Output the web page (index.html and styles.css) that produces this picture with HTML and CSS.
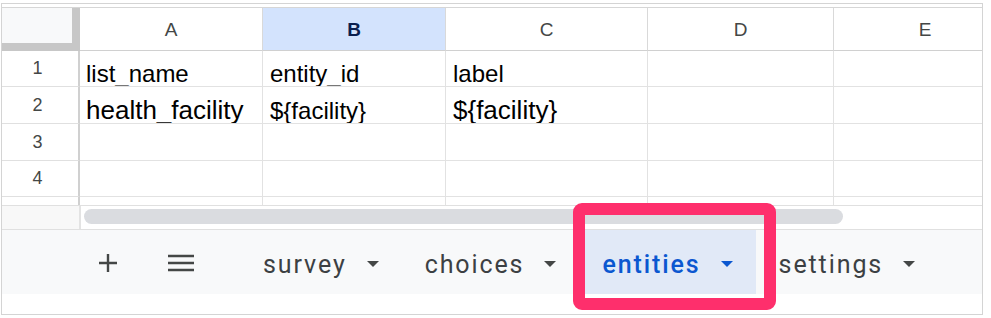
FILE: index.html
```html
<!DOCTYPE html>
<html>
<head>
<meta charset="utf-8">
<link rel="stylesheet" href="styles.css">
</head>
<body>
<div class="frame">
  <div class="grid">
    <div class="corner"></div>
    <div class="colhdr">A</div>
    <div class="colhdr sel">B</div>
    <div class="colhdr">C</div>
    <div class="colhdr">D</div>
    <div class="colhdr">E</div>

    <div class="rowhdr r1">1</div>
    <div class="cell r1">list_name</div>
    <div class="cell r1">entity_id</div>
    <div class="cell r1">label</div>
    <div class="cell r1"></div>
    <div class="cell r1"></div>

    <div class="rowhdr">2</div>
    <div class="cell big">health_facility</div>
    <div class="cell">${facility}</div>
    <div class="cell big">${facility}</div>
    <div class="cell"></div>
    <div class="cell"></div>

    <div class="rowhdr">3</div>
    <div class="cell"></div>
    <div class="cell"></div>
    <div class="cell"></div>
    <div class="cell"></div>
    <div class="cell"></div>

    <div class="rowhdr r4">4</div>
    <div class="cell r4"></div>
    <div class="cell r4"></div>
    <div class="cell r4"></div>
    <div class="cell r4"></div>
    <div class="cell r4"></div>

    <div class="rowhdr part"></div>
    <div class="cell part"></div>
    <div class="cell part"></div>
    <div class="cell part"></div>
    <div class="cell part"></div>
    <div class="cell part"></div>
  </div>
  <div class="scrollrow">
    <div class="scrollcorner"></div>
    <div class="track"><div class="thumb"></div></div>
  </div>
  <div class="tabbar">
    <div class="iconbtn plus">
      <svg width="20" height="20" viewBox="0 0 20 20"><path d="M10 1v18M1 10h18" stroke="#444746" stroke-width="2.4" fill="none"/></svg>
    </div>
    <div class="iconbtn menu">
      <svg width="28" height="18" viewBox="0 0 28 18"><path d="M1 2h26M1 9h26M1 16h26" stroke="#444746" stroke-width="2.4" fill="none"/></svg>
    </div>
    <div class="tabs">
      <div class="tab"><span class="tname">survey</span><span class="caret"></span></div>
      <div class="tab"><span class="tname">choices</span><span class="caret"></span></div>
      <div class="tab active"><span class="tname">entities</span><span class="caret"></span></div>
      <div class="tab"><span class="tname">settings</span><span class="caret"></span></div>
    </div>
  </div>
  <div class="foot"></div>
  <div class="highlight"></div>
</div>
</body>
</html>
```
FILE: styles.css
```css
html, body {
  margin: 0;
  padding: 0;
  background: #ffffff;
}
body {
  width: 991px;
  height: 318px;
  overflow: hidden;
  font-family: "Liberation Sans", Arial, sans-serif;
}
.frame {
  position: relative;
  margin: 3px 0 0 1px;
  width: 980px;
  height: 307px;
  border: 1px solid #d4d4d4;
  padding-top: 3px;
  box-sizing: content-box;
}
.grid {
  display: grid;
  grid-template-columns: 78px 183px 183px 202px 186px 183px;
  grid-template-rows: 43px 36px 37px 37px 36px 8px;
  border-top: 1px solid #d6d6d6;
  width: 980px;
  overflow: hidden;
}
.corner {
  background: #f8f9fa;
  border-right: 8px solid #c7c7c7;
  border-bottom: 8px solid #c7c7c7;
}
.colhdr {
  display: flex;
  align-items: center;
  justify-content: center;
  font-size: 19px;
  color: #444746;
  border-right: 1px solid #d9d9d9;
  border-bottom: 1px solid #d0d0d0;
  padding-top: 1px;
}
.colhdr.sel {
  background: #d3e3fd;
  color: #0b1f4e;
  font-weight: bold;
}
.rowhdr {
  display: flex;
  align-items: center;
  justify-content: center;
  font-size: 18px;
  color: #444746;
  border-right: 2px solid #d0d0d0;
  border-bottom: 1px solid #e0e0e0;
  padding-right: 5px;
}
.cell {
  display: flex;
  align-items: flex-end;
  padding: 0 0 0 7px;
  font-size: 24px;
  line-height: 1;
  color: #000;
  border-right: 1px solid #e2e2e2;
  border-bottom: 1px solid #e2e2e2;
  white-space: nowrap;
  overflow: hidden;
}
.cell.big {
  font-size: 26px;
}
.cell:nth-child(6n+2) {
  padding-left: 6px;
}
.part {
  border-bottom: none;
}
.scrollrow {
  display: flex;
  height: 23px;
  border-top: 1px solid #e0e0e0;
}
.scrollcorner {
  width: 77px;
  background: #f8f8f8;
  border-right: 2px solid #e3e3e3;
}
.track {
  flex: 1;
  padding: 3px 0 0 3px;
}
.thumb {
  width: 759px;
  height: 15px;
  border-radius: 8px;
  background: #dadce0;
}
.tabbar {
  display: flex;
  align-items: center;
  height: 64px;
  background: #f8f9fa;
  border-top: 1px solid #e0e0e0;
  padding-left: 86px;
  font-family: Roboto, "Noto Sans", sans-serif;
}
.iconbtn {
  width: 40px;
  height: 40px;
  display: flex;
  align-items: center;
  justify-content: center;
  margin-top: 2px;
}
.menu {
  margin-left: 33px;
}
.tabs {
  display: flex;
  height: 64px;
  margin-left: 43px;
  gap: 4px;
}
.tab {
  display: flex;
  align-items: center;
  padding: 4px 23px 0 19px;
  font-size: 25px;
  letter-spacing: 1.9px;
  color: #3c4043;
  font-weight: 400;
}
.tab.active {
  background: #e1e9f7;
  color: #0b57d0;
  font-weight: 500;
}
.caret {
  width: 0;
  height: 0;
  margin-left: 20px;
  margin-top: -1px;
  border-left: 6px solid transparent;
  border-right: 6px solid transparent;
  border-top: 6px solid #444746;
}
.tab.active .caret {
  border-top-color: #0b57d0;
}
.foot {
  height: 16px;
}
.highlight {
  position: absolute;
  left: 571px;
  top: 199px;
  width: 179px;
  height: 83px;
  border: 12px solid #fe2f6c;
  border-radius: 9px;
}
```
